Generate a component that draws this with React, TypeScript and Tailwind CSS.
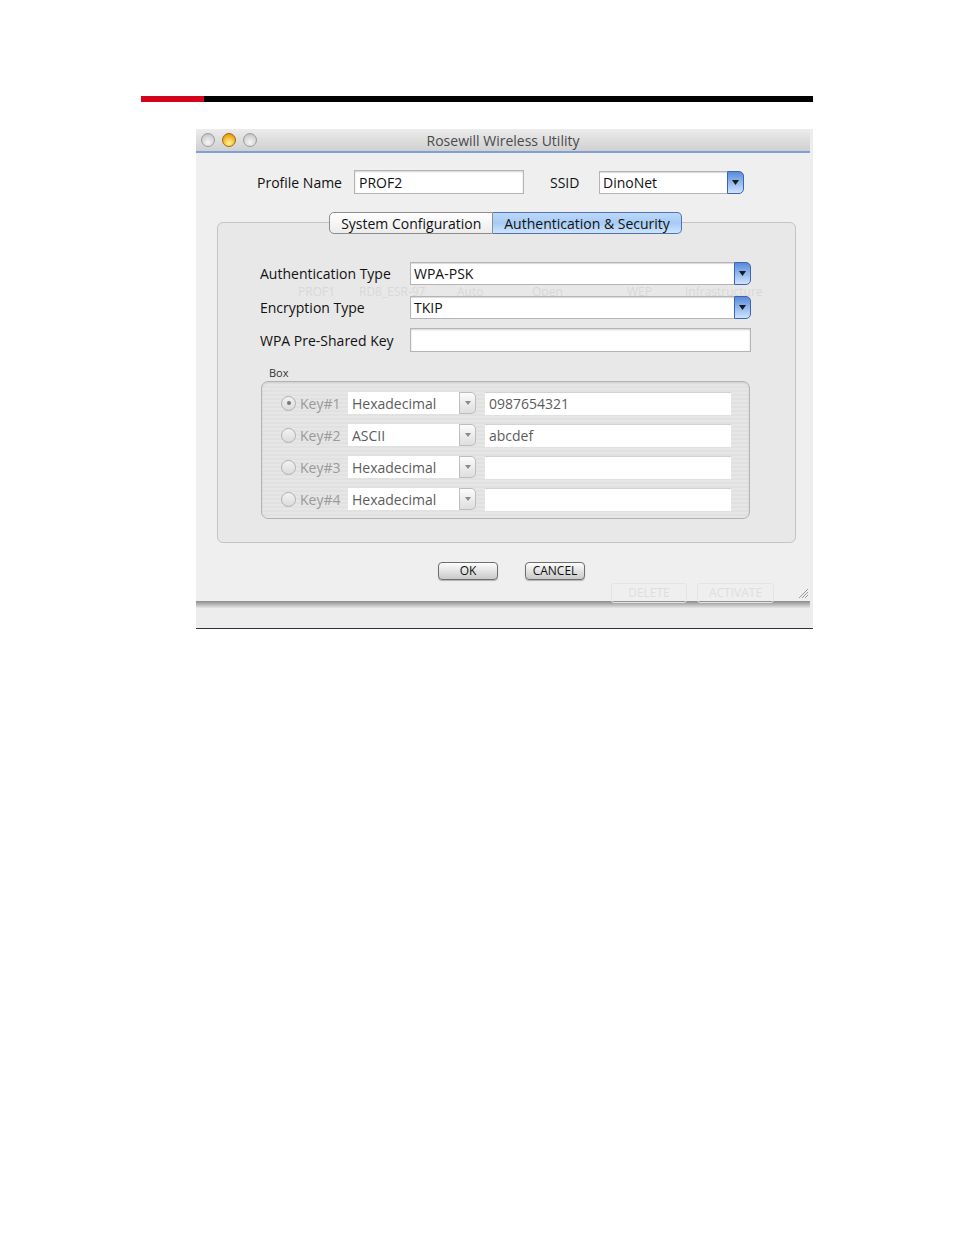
const font = "font-['Open_Sans','DejaVu_Sans',sans-serif]";

function BlueArrow() {
  return (
    <div className="flex h-full w-[17px] shrink-0 items-center justify-center rounded-r-[5px] border border-[#3f63ad] bg-gradient-to-b from-[#5b8adb] via-[#92b8ef] to-[#cfe3fb]">
      <svg width="7" height="5" viewBox="0 0 7 5">
        <path d="M0 0H7L3.5 5Z" fill="#1a1a1a" />
      </svg>
    </div>
  );
}

function GrayArrow() {
  return (
    <div className="flex h-full w-[17px] shrink-0 items-center justify-center rounded-r-[5px] border border-[#bdbdbd] bg-gradient-to-b from-[#fbfbfb] to-[#dedede]">
      <svg width="6" height="4" viewBox="0 0 6 4">
        <path d="M0 0H6L3 4Z" fill="#8a8a8a" />
      </svg>
    </div>
  );
}

function Select({ value, className }: { value: string; className: string }) {
  return (
    <div className={`flex ${className}`}>
      <div className="flex flex-1 items-center border border-[#b4b4b4] border-r-0 bg-white pl-[3px] text-[14px] text-[#111] shadow-[inset_0_1px_1px_rgba(0,0,0,0.15)]">
        {value}
      </div>
      <BlueArrow />
    </div>
  );
}

function Field({ value, className }: { value?: string; className: string }) {
  return (
    <div className={`flex items-center border border-[#b4b4b4] bg-white pl-[4px] text-[14px] text-[#111] shadow-[inset_0_1px_2px_rgba(0,0,0,0.18)] ${className}`}>
      {value}
    </div>
  );
}

const keys = [
  { name: 'Key#1', format: 'Hexadecimal', value: '0987654321', checked: true },
  { name: 'Key#2', format: 'ASCII', value: 'abcdef', checked: false },
  { name: 'Key#3', format: 'Hexadecimal', value: '', checked: false },
  { name: 'Key#4', format: 'Hexadecimal', value: '', checked: false },
];

// faint text of the window behind, showing through
const ghost = [
  { t: 'PROF1', w: 'w-[61px]' },
  { t: 'RD8_ESR-97', w: 'w-[98px]' },
  { t: 'Auto', w: 'w-[75px]' },
  { t: 'Open', w: 'w-[95px]' },
  { t: 'WEP', w: 'w-[58px]' },
  { t: 'Infrastructure', w: 'w-[90px]' },
];

function KeyRow({ k }: { k: (typeof keys)[number] }) {
  return (
    <div className="flex h-[22px] items-center">
      <div className="ml-[19px] flex h-[15px] w-[15px] items-center justify-center rounded-full border border-[#b0b0b0] bg-gradient-to-b from-[#f2f2f2] to-[#dcdcdc]">
        {k.checked && <div className="h-[4px] w-[4px] rounded-full bg-[#777]" />}
      </div>
      <span className="ml-[4px] w-[48px] text-[14px] text-[#9a9a9a]">{k.name}</span>
      <div className="flex h-[22px] w-[128px]">
        <div className="flex flex-1 items-center bg-white pl-[4px] text-[14px] text-[#5c5c5c]">{k.format}</div>
        <GrayArrow />
      </div>
      <div className="ml-[9px] flex h-[23px] w-[246px] items-center border-t border-[#d2d2d2] bg-white pl-[4px] text-[14px] text-[#5c5c5c]">
        {k.value}
      </div>
    </div>
  );
}

function Light({ yellow }: { yellow?: boolean }) {
  return yellow ? (
    <div className="h-[14px] w-[14px] rounded-full border border-[#9b6a10] bg-[radial-gradient(circle_at_50%_75%,#fff6a8_0%,#f7c23a_45%,#d98300_100%)]" />
  ) : (
    <div className="h-[14px] w-[14px] rounded-full border border-[#9c9c9c] bg-[radial-gradient(circle_at_50%_70%,#f6f6f6_0%,#d4d4d4_60%,#b4b4b4_100%)]" />
  );
}

function Button({ label, w }: { label: string; w: string }) {
  return (
    <div className={`flex h-[18px] ${w} items-center justify-center rounded-[4px] border border-[#6e6e6e] bg-gradient-to-b from-[#fdfdfd] via-[#e3e3e3] to-[#c9c9c9] text-[12px] leading-none text-[#111] shadow-[0_1px_1px_rgba(0,0,0,0.25)]`}>
      {label}
    </div>
  );
}

export default function App() {
  return (
    <div className={`h-[1235px] w-[954px] bg-white ${font}`}>
      <div className="pt-[96px]">
        <div className="ml-[141px] flex h-[6px] w-[672px]">
          <div className="w-[63px] bg-[#d4021d]" />
          <div className="flex-1 bg-black" />
        </div>
      </div>

      <div className="ml-[196px] mt-[27px] flex h-[500px] w-[617px] flex-col bg-[#ededed]">
        {/* window */}
        <div className="flex h-[472px] w-[614px] flex-col">
          <div className="relative flex h-[24px] items-center border-b-2 border-[#7f9fd6] bg-gradient-to-b from-[#ececec] to-[#d0d0d0]">
            <div className="flex gap-[7px] pl-[5px]">
              <Light />
              <Light yellow />
              <Light />
            </div>
            <div className="absolute inset-0 flex items-center justify-center text-[14px] text-[#4a4a4a]">Rosewill Wireless Utility</div>
          </div>

          <div className="relative flex flex-1 flex-col bg-[#efefef]">
            {/* ghost buttons of the window behind */}
            <div className="pointer-events-none absolute left-[415px] top-[430px] flex gap-[10px] text-[12px] leading-none text-[#dedede]">
              <div className="flex h-[20px] w-[76px] items-center justify-center rounded-[3px] border border-[#e4e4e4]">DELETE</div>
              <div className="flex h-[20px] w-[77px] items-center justify-center rounded-[3px] border border-[#e4e4e4]">ACTIVATE</div>
            </div>

            <div className="flex items-center pl-[61px] pt-[17px]">
              <span className="w-[97px] text-[14px] text-[#111]">Profile Name</span>
              <Field value="PROF2" className="h-[24px] w-[170px]" />
              <span className="ml-[26px] w-[49px] text-[14px] text-[#111]">SSID</span>
              <Select value="DinoNet" className="h-[23px] w-[145px]" />
            </div>

            <div className="mt-[18px] flex justify-center pl-[5px]">
              <div className="relative z-10 flex h-[22px] text-[14px]">
                <div className="flex items-center rounded-l-[5px] border border-[#8e8e8e] bg-gradient-to-b from-white to-[#ececec] px-[11px] text-[#111]">System Configuration</div>
                <div className="flex items-center rounded-r-[5px] border border-l-0 border-[#4f72b8] bg-gradient-to-b from-[#bcd8f9] via-[#a6cbf4] to-[#cfe4fb] px-[11px] text-[#111]">Authentication &amp; Security</div>
              </div>
            </div>

            <div className="relative -mt-[12px] ml-[21px] h-[321px] w-[579px] rounded-[6px] border border-[#c4c4c4] bg-[#e8e8e8] pt-[39px]">
              <div className="pointer-events-none absolute left-[80px] top-[63px] flex text-[12px] leading-[12px] text-[#d8d8d8]">
                {ghost.map((g) => (
                  <span key={g.t} className={g.w}>{g.t}</span>
                ))}
              </div>

              <div className="relative flex items-center">
                <span className="ml-[42px] w-[150px] text-[14px] text-[#111]">Authentication Type</span>
                <Select value="WPA-PSK" className="h-[23px] w-[341px]" />
              </div>
              <div className="relative mt-[11px] flex items-center">
                <span className="ml-[42px] w-[150px] text-[14px] text-[#111]">Encryption Type</span>
                <Select value="TKIP" className="h-[23px] w-[341px]" />
              </div>
              <div className="relative mt-[9px] flex items-center">
                <span className="ml-[42px] w-[150px] text-[14px] text-[#111]">WPA Pre-Shared Key</span>
                <Field className="h-[24px] w-[341px]" />
              </div>

              <div className="ml-[51px] mt-[13px] text-[11px] leading-[15px] text-[#333]">Box</div>
              <div className="ml-[43px] mt-[1px] flex h-[138px] w-[489px] flex-col gap-[10px] rounded-[7px] border border-[#b3b3b3] bg-[repeating-linear-gradient(0deg,#e6e6e6_0px,#e6e6e6_2px,#e1e1e1_2px,#e1e1e1_4px)] pt-[10px] shadow-[inset_0_1px_2px_rgba(0,0,0,0.08)]">
                {keys.map((k) => (
                  <KeyRow key={k.name} k={k} />
                ))}
              </div>
            </div>

            <div className="relative mt-[19px] flex gap-[27px] pl-[242px]">
              <Button label="OK" w="w-[60px]" />
              <Button label="CANCEL" w="w-[60px]" />
            </div>

            <svg className="absolute bottom-[3px] right-[2px]" width="10" height="10" viewBox="0 0 10 10">
              <path d="M1 10L10 1M4 10L10 4M7 10L10 7" stroke="#9a9a9a" strokeWidth="1" />
            </svg>
          </div>
        </div>
        <div className="h-[7px] w-[614px] bg-gradient-to-b from-[#8c8c8c] via-[#b8b8b8] to-[#e6e6e6]" />
        <div className="flex-1" />
        <div className="h-[1px] bg-[#2a3340]" />
      </div>
    </div>
  );
}
